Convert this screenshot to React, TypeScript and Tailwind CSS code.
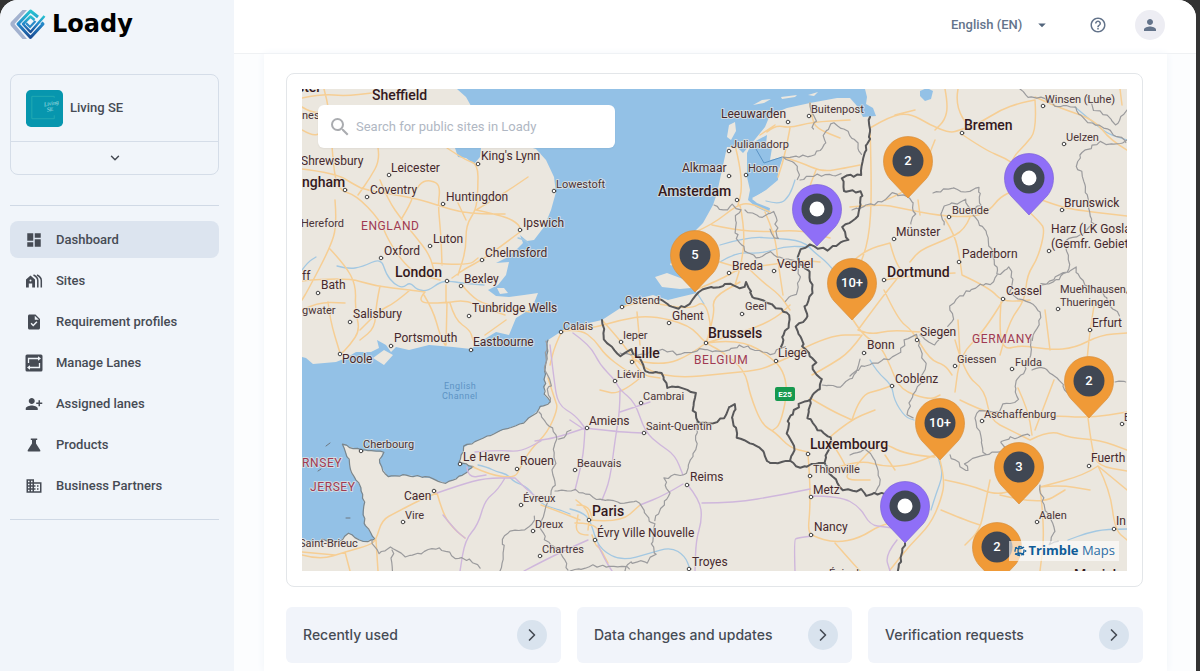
import type { ReactNode } from "react"
import {
  MdArrowDropDown,
  MdBusiness,
  MdDashboard,
  MdHelpOutline,
  MdPerson,
  MdPersonAddAlt1,
  MdSearch,
  MdTask,
} from "react-icons/md"
import { ChevronDown, ChevronRight } from "lucide-react"

// The map is drawn in its own canvas space, which starts at MAP.x / MAP.y
const MAP = { x: 302, y: 89, width: 825, height: 482 }

const land = [
  // Great Britain
  "M302 89H457L466 97 471 106 464 120 455 135V148L458 157 466 158 474 164 480 157 481 148 500 144 520 144 536 149 546 160 554 177 556 192 551 210 544 227 534 240 527 241 520 235 523 243 516 250 506 258 496 263 509 262 506 275 498 285 488 290 496 296 509 297 524 295 538 293 534 303 529 310 516 318 509 335 496 332 483 340 471 349 453 347 429 345 409 350 396 347 391 352 386 345 377 340 379 348 371 352 356 352 346 358 336 362 313 364 306 358 302 357Z",
  "M373 358L384 350 393 355 384 365Z",
  "M497 288L504 288 508 293 500 294Z",
  // Continent
  "M602 320L622 307 637 299 653 295 668 300 680 297 697 293 691 288 680 289 662 287 655 277 667 273 683 279 691 283 693 270 670 265 677 247 693 233 703 223 713 205 717 193 722 170 727 147 737 147 743 153 752 143 765 127 770 115 787 108 810 103 837 98 850 98 857 106 863 117 876 116 873 108 866 104 867 97 865 89H1127V571H302V538L313 543 323 540 339 542 348 533 363 542 375 539 364 523V503L361 487 351 473 349 460 343 445 361 450 383 452 379 463 388 477 406 475 429 478 446 483 463 475 473 467 459 462 464 447 483 438 503 430 523 423 536 412 541 407 551 402 544 395 546 363 548 340 562 331 580 325Z",
  // Wadden islands
  "M729 125L735 122 736 131 731 140 727 137Z",
  "M753 105L762 100 771 99 764 103Z",
  "M781 97L797 95 795 97 782 99Z",
  "M808 95L818 92 814 96Z",
]

const lakes = [
  "M747 153L752 143 767 135 766 144 772 148 770 160 783 157 778 172 778 180 766 190 752 199 757 203 770 208 769 213 756 207 748 200 750 190 747 177Z",
  "M920 91L927 88 933 91 931 99 925 101 920 96Z",
]

const rivers = [
  "M337 266 348 269 362 267 381 258 386 274 394 284 403 288 410 282 417 290 428 291 440 282 450 281 461 283 484 285",
  "M720 245 747 237 775 238 803 241 815 253 828 263 845 285",
  "M720 262 736 252 760 254 785 246 810 247",
  "M697 293 704 304",
  "M870 360 877 372 892 385 894 400 905 417 914 420",
  "M927 417 939 460 943 475 936 494 931 510",
  "M1075 107 1095 124 1108 134 1127 140",
  "M570 509 582 512 590 520 594 534 601 550 622 561 650 553 671 547 685 556 690 569",
  "M478 465 487 467 497 472 507 474 514 482 528 487 540 504 560 510 570 514",
  "M1127 529 1106 529 1087 533 1068 540",
  "M302 270 308 262 316 257",
  "M766 201 780 205 790 195 795 180",
  "M518 238 526 240 530 246",
]

const highways = [
  "M302 98 322 94 345 96 372 93 M302 107 315 115 330 108 M302 130 312 136 322 133 M324 89 330 110 333 165 338 190 356 195 380 220 388 240 405 265 420 275 440 280",
  "M302 169 335 173 355 185 365 190 415 198 440 206 460 212 482 214 505 214",
  "M335 200 337 225 330 248 308 290 302 300 M330 249 345 265 356 285 355 310 360 330 350 345 340 355",
  "M378 148 380 160 370 178 358 195 M380 180 388 200 402 220 415 236 430 255 435 275",
  "M302 281 345 277 375 286 410 290 425 292 M402 218 410 205 415 190 424 180 437 182 440 190 438 205 441 235 442 265 M432 263 468 266 478 258",
  "M447 148 465 160 478 164 478 190 476 210 466 225 466 250 458 275 M476 210 500 196 528 177 M458 203 466 220",
  "M520 232 500 247 482 260 466 268 452 278 M476 210 505 216 520 225 520 232",
  "M380 286 376 305 375 328 360 340 M410 290 395 303 380 310 360 330 M425 292 415 303 445 303 465 300 485 308 505 315",
  "M424 295 433 310 440 335 445 345 M447 303 446 345 M450 303 455 320 470 330 473 340 M446 285 446 303 M462 285 470 295 485 305 530 312 M485 335 506 320",
  "M328 302 330 320 340 353 M302 310 318 302 345 303",
  "M562 331 555 345 550 365 M562 331 580 329 595 340 605 355 625 370 640 378 M602 320 620 340 632 357 650 372 680 378 720 374 760 370 776 363 800 352",
  "M562 331 590 329 620 320 650 315 690 325 705 343 720 350 745 370 750 395 762 425 775 432 790 448 808 452 M622 307 640 300 690 310 705 300 712 330 706 343",
  "M637 312 640 345 M706 343 740 338 775 360 785 375 787 395 780 425 773 430",
  "M706 343 690 355 665 365 630 360 M706 343 750 330 776 318 790 305 M706 343 715 315 712 298 740 282",
  "M695 290 720 280 740 268 770 265 800 260 820 262 M693 233 712 225 737 205 750 203 770 212 M712 225 735 230 765 232 800 230 830 238",
  "M735 145 740 165 742 190 738 205 M767 132 775 125 790 128 812 122 850 120 M790 128 785 155 778 177 M775 125 760 135 M810 103 812 122 820 130 840 138 M783 157 800 162 822 172 845 168 860 165 M816 170 806 195 800 225",
  "M740 205 745 230 742 262 735 285 M742 262 760 280 780 295 790 310 M765 212 775 235 778 262 783 295 M713 260 740 268",
  "M870 128 890 116 910 113 930 125 950 133 960 130 980 123 1000 110 1020 103 1035 100 M960 133 985 150 1005 158 1020 168 M870 128 872 190 869 240 858 270",
  "M945 89 948 105 945 120 935 130 M895 115 915 110 M958 89 955 105 970 130 M1035 100 1037 130 1025 145 1012 158 1010 175",
  "M850 207 880 204 900 208 940 216 975 217 990 210 1000 197 1015 190 1055 205 1075 210 1127 216 M1020 203 1040 222 1045 230 1038 258 1027 275 1025 300 1010 320 1000 355",
  "M970 217 965 230 945 240 920 250 910 262 M945 219 955 235 960 260 962 275 M962 275 990 288 1002 302 1030 300 M884 280 915 275 955 273 M884 290 898 320 912 330 930 360 945 365 952 375",
  "M885 200 915 190 935 140 M852 262 865 250 890 243 M890 243 895 262 905 275 M918 200 920 215",
  "M858 330 870 335 890 330 920 332 M850 315 862 335 880 345 890 365 900 390 930 400 940 395 M862 335 850 352 830 365 812 375 M858 330 880 300 900 275",
  "M810 398 830 410 852 420 M852 420 860 395 880 390 893 385 M830 437 850 420 875 410 M800 350 830 335 860 335",
  "M1001 302 999 330 1004 350 1020 345 1050 350 1075 348 1100 335 1127 333 M1002 302 985 330 960 355 955 392 M955 340 965 375 985 390 990 420 1010 430 1030 440",
  "M1030 440 1050 430 1070 438 1100 440 1127 450 M1018 388 1028 410 1032 435 M1054 380 1035 430 M960 400 1000 420 1045 415 1090 418 1127 412 M1088 418 1092 450 1098 466 1127 471 M1098 466 1085 475 1040 487",
  "M838 467 860 460 885 467 910 465 935 455 M940 460 945 480 941 500 930 525 910 545 890 570 M945 480 970 485 995 495 1015 490 M935 457 905 455 880 440 852 470",
  "M941 510 965 520 980 525 M990 480 985 505 980 530 965 545 M1098 466 1110 490 1115 530 1127 540 M1098 466 1127 490 M1040 487 1045 530 1040 571 M1040 487 1060 485 1090 490",
  "M808 454 810 480 810 510 808 530 812 536 835 543 860 538 880 525 905 520 M835 543 850 560 860 571 M830 440 850 470 845 480 870 480",
  "M302 555 320 560 345 552 370 545 376 540 382 520 395 513 420 500 437 493 M376 540 378 571 M302 552 335 555 M437 493 443 515 455 530 465 538 M345 552 350 571",
  "M548 378 555 400 558 408 548 432 530 450 520 468 M473 467 490 475 515 478 520 468 M541 505 560 512 580 520 M576 500 590 510 588 530 M577 505 588 505 592 518 M575 523 592 523 600 532 M590 520 620 523 640 505 M588 535 575 535 578 515 M592 535 595 545 600 548 608 563",
  "M640 378 620 395 600 390 M632 357 640 375 660 378 M1127 150 1110 140 1095 120 1060 108 1035 97 M1120 89 1122 105",
  "M885 455 895 470 M960 355 958 320 M1045 310 1050 350 M1095 300 1090 330 1087 360 M1000 495 1040 505 1065 490",
]

const tollRoads = [
  "M550 345 554 380 558 405 575 415 585 428 M573 333 590 345 600 365 615 380 620 390 635 402 645 432 660 445 675 455 683 475",
  "M585 428 560 437 535 441 M585 428 584 450 580 470 575 490 M585 428 620 432 643 433 M620 390 620 410 615 440 610 480 602 500 M585 430 570 420",
  "M687 484 700 500 702 520 696 540 695 571 M702 503 735 503 780 495 810 489 M683 484 665 495 640 505 M810 496 840 496 860 507 870 525 885 527 893 528",
  "M437 493 460 485 485 478 515 478 M475 452 500 450 520 452 541 441 M515 478 525 488 540 500 M505 478 498 490 485 500 478 525 465 540 460 571",
  "M467 467 468 478 486 475 M524 571 545 560 570 548 588 540 M598 545 605 560 612 571 M795 571 794 540 797 538 812 536 M620 412 650 402",
  "M897 540 885 555 890 571 M443 515 455 530 465 538",
]

const regions = [
  "M546 341 546 370 551 385 547 390 551 402",
  "M539 412 545 420 553 428 556 440 553 450 555 462 552 475 556 486 552 491 545 510 540 525 545 540 560 550 568 571",
  "M555 491 575 490 600 500 625 503 637 500 641 507 650 520 655 525 652 545 655 555 648 562 630 562",
  "M697 422 696 445 690 460 687 473 665 478 666 485 670 495 655 520",
  "M620 353 635 355 665 350 680 355 700 350 725 352 740 345 770 355 785 347",
  "M714 205 723 210 732 205 740 210 735 220 737 240 745 247 745 252 760 258 770 253 795 262 M745 210 760 218 775 212 778 240 770 230 M795 262 800 280 795 295 785 300",
  "M783 157 795 162 800 175 797 180 M810 103 815 120 812 130 M783 157 815 155 825 145 823 135 835 122 845 130 855 140 862 155 M800 180 810 175 840 175",
  "M372 540 378 555 390 548 405 556 425 552 440 547 455 558 470 560 480 568 M392 550 393 571 M500 571 505 550 502 540 510 530 530 528 535 515",
  "M852 210 870 205 885 200 892 193 910 197 915 215 910 225 M1127 140 1115 145 1100 142 1080 155 1077 165 1085 180 1088 200 1090 215 1093 225",
  "M933 193 945 190 955 187 965 193 980 187 980 205 970 210 965 200 945 207 940 215 945 225 M973 215 985 230 990 245 995 260 997 275 1010 268 1013 280 1010 292 1018 300 1030 302 1040 312 1038 325 1032 340",
  "M997 275 990 285 980 285 965 292 950 305 955 320 948 325 M1093 225 1080 235 1065 240 1070 265 1060 280 1042 285",
  "M1042 285 1060 275 1075 268 1085 285 1100 290 1110 305 1120 315",
  "M850 376 865 365 885 360 900 353 905 340 915 335 920 345 925 365 920 385 910 400 908 415 913 418 M920 335 935 345 945 335",
  "M1030 335 1032 350 1025 370 1015 382 1018 400 1002 405 1000 412 980 410 975 418 M1032 370 1045 368 1060 380 1070 397 1085 398 M1115 382 1127 383",
  "M975 418 980 435 985 455 965 463 968 472 955 460 950 455 M985 455 1005 450 1000 440 1030 435 M1040 485 1045 510 1055 530 1050 545 1058 540",
  "M850 455 865 450 875 460 880 485 875 492 M822 385 840 388 855 375 860 360 M1020 89 1028 97 1045 98 1053 105 1075 107 1085 120 1100 125 1127 143",
  "M571 430 560 440 M570 571 590 566 630 568 M625 571 630 562 M1127 110 1115 125 1108 115 1095 110 1085 95",
]

const borders = [
  "M658 300 664 300 673 308 690 305 698 293 710 287 718 288 730 283 740 288 747 283 752 297 770 303 787 313 790 320 783 337 782 347",
  "M870 117 870 140 863 157 860 175 842 177 843 190 860 192 862 195 860 213 850 223 842 228 847 240 827 250 810 245 798 252 800 263 810 273 813 290 805 307 808 317 797 327 803 340 803 347 815 362 813 370 822 380 820 388 810 398 800 403 788 420 787 433 795 450 790 460",
  "M810 400 808 417 817 430 832 437 830 447 823 463",
  "M770 463 790 460 800 467 823 463 833 477 843 490 860 490 867 495 883 493 895 496",
  "M905 543 903 553 898 571",
  "M602 320 605 340 620 355 630 350 642 360 645 372 663 373 667 388 683 387 695 393 693 410 697 422 713 423 725 418 728 407 735 405 733 420 737 437 750 442 762 450 770 463",
]

const coastline =
  "M548 340 546 363 544 395 551 402 541 407 536 412 523 423 503 430 483 438 464 447 459 462 473 467 463 475 446 483 429 478 406 475 388 477 379 463 383 452 361 450 343 445 349 460 351 473 361 487 364 503 364 523 375 539 363 542 348 533 339 542 323 540"

type Point = [x: number, y: number]

function parseLines(d: string): Point[][] {
  return d
    .split("M")
    .filter((part) => part.trim())
    .map((part) => {
      const n = part.trim().split(/\s+/).map(Number)
      return n.flatMap((x, i): Point[] => (i % 2 ? [] : [[x, n[i + 1] ?? 0]]))
    })
}

// Repeatable pseudo random number in -1..1
function noise(seed: number) {
  const s = Math.sin(seed * 12.9898) * 43758.5453
  return (s - Math.floor(s)) * 2 - 1
}

// Adds small kinks between the points, for borders that follow the terrain
function jagged(lines: string[], amount: number) {
  return parseLines(lines.join(" "))
    .map((points) => {
      let d = `M${points[0]}`
      for (let i = 1; i < points.length; i++) {
        const [x0, y0] = points[i - 1]!
        const [x1, y1] = points[i]!
        const steps = Math.max(1, Math.round(Math.hypot(x1 - x0, y1 - y0) / 4))
        for (let s = 1; s <= steps; s++) {
          const x = x0 + ((x1 - x0) * s) / steps
          const y = y0 + ((y1 - y0) * s) / steps
          const dx = noise(x + y * 3) * amount
          const dy = noise(x * 5 + y) * amount
          d += `L${(x + dx).toFixed(1)} ${(y + dy).toFixed(1)}`
        }
      }
      return d
    })
    .join("")
}

// Rounds the corners of a line by running curves through the midpoints
function smooth(lines: string[]) {
  return parseLines(lines.join(" "))
    .map((points) => {
      let d = `M${points[0]}`
      for (let i = 1; i < points.length - 1; i++) {
        const [x, y] = points[i]!
        const [nx, ny] = points[i + 1]!
        d += `Q${x} ${y} ${(x + nx) / 2} ${(y + ny) / 2}`
      }
      return d + `L${points[points.length - 1]}`
    })
    .join("")
}

type Label = [text: string, x: number, y: number, dot?: Point]

const cities: Label[] = [
  ["Sheffield", 372, 100],
  ["ster", 297, 92],
  ["ngham", 302, 187, [345, 190]],
  ["London", 395, 277, [447, 281]],
  ["Amsterdam", 658, 196, [737, 200]],
  ["Bremen", 964, 130, [962, 133]],
  ["Dortmund", 887, 277, [884, 280]],
  ["Brussels", 708, 338, [706, 343]],
  ["Lille", 634, 358, [632, 362]],
  ["Luxembourg", 810, 449, [808, 454]],
  ["Paris", 592, 516, [589, 520]],
]

const towns: Label[] = [
  ["Leicester", 391, 172, [389, 175]],
  ["Shrewsbury", 301, 165],
  ["Coventry", 370, 194, [367, 197]],
  ["Huntingdon", 446, 201, [443, 204]],
  ["King's Lynn", 481, 160, [478, 164]],
  ["Ipswich", 523, 227, [520, 230]],
  ["Luton", 433, 243, [430, 246]],
  ["Oxford", 384, 255, [381, 258]],
  ["Chelmsford", 485, 257, [482, 260]],
  ["Bexley", 464, 283, [461, 286]],
  ["Bath", 321, 289, [318, 293]],
  ["ff", 302, 280],
  ["Salisbury", 353, 318, [350, 322]],
  ["Tunbridge Wells", 472, 312, [469, 316]],
  ["Portsmouth", 394, 342, [391, 346]],
  ["Eastbourne", 473, 346, [471, 350]],
  ["Poole", 342, 363, [340, 354]],
  ["Leeuwarden", 721, 118, [788, 122]],
  ["Alkmaar", 682, 172, [729, 176]],
  ["Breda", 732, 270, [729, 273]],
  ["Veghel", 777, 268, [774, 271]],
  ["Ghent", 672, 320, [669, 323]],
  ["Liege", 778, 357, [776, 361]],
  ["Münster", 896, 236, [894, 239]],
  ["Paderborn", 962, 258, [959, 262]],
  ["Brunswick", 1064, 207, [1062, 210]],
  ["Harz (LK Goslar)", 1051, 233],
  ["(Gemfr. Gebiet)", 1051, 248, [1049, 251]],
  ["Cassel", 1006, 295, [1003, 299]],
  ["Erfurt", 1092, 327, [1090, 330]],
  ["Siegen", 920, 336, [917, 340]],
  ["Bonn", 867, 349, [864, 353]],
  ["Coblenz", 895, 383, [892, 386]],
  ["Fuerth", 1091, 462, [1089, 466]],
  ["Amiens", 589, 425, [587, 428]],
  ["Reims", 690, 481, [687, 485]],
  ["Metz", 813, 494, [811, 497]],
  ["Nancy", 814, 531, [811, 535]],
  ["Troyes", 692, 566, [689, 569]],
  ["Évry Ville Nouvelle", 597, 537, [595, 540]],
  ["Le Havre", 463, 461, [460, 464]],
  ["Rouen", 520, 465, [517, 469]],
  ["Caen", 404, 500, [434, 491]],
  ["In", 1116, 525, [1114, 529]],
]

const villages: Label[] = [
  ["Hereford", 301, 227],
  ["Lowestoft", 556, 188, [554, 191]],
  ["gwater", 302, 314],
  ["nes", 302, 119],
  ["Calais", 563, 330, [561, 332]],
  ["Julianadorp", 731, 148, [729, 151]],
  ["Hoorn", 748, 172, [746, 175]],
  ["Buitenpost", 811, 113, [809, 116]],
  ["Winsen (Luhe)", 1045, 103, [1043, 106]],
  ["Uelzen", 1066, 141, [1064, 144]],
  ["Buende", 952, 214, [949, 217]],
  ["Muehlhausen/", 1060, 293],
  ["Thueringen", 1060, 306, [1058, 309]],
  ["Giessen", 957, 363, [955, 366]],
  ["Fulda", 1015, 366, [1012, 369]],
  ["Aschaffenburg", 984, 418, [982, 421]],
  ["Aalen", 1039, 519, [1037, 522]],
  ["Ostend", 625, 304, [622, 307]],
  ["Ieper", 623, 339, [621, 342]],
  ["Geel", 745, 310, [742, 314]],
  ["Liévin", 617, 378, [615, 381]],
  ["Cambrai", 643, 400, [641, 403]],
  ["Saint-Quentin", 646, 430, [644, 433]],
  ["Beauvais", 577, 467, [575, 470]],
  ["Thionville", 813, 473, [810, 476]],
  ["Évreux", 523, 502, [521, 505]],
  ["Dreux", 535, 528, [533, 531]],
  ["Chartres", 542, 553, [540, 556]],
  ["Cherbourg", 363, 448, [361, 451]],
  ["Vire", 405, 519, [403, 522]],
  ["Saint-Brieuc", 299, 547],
  ["E", 1124, 421, [1122, 424]],
  ["Épinal", 829, 577],
]

const countries: Label[] = [
  ["ENGLAND", 361, 230],
  ["BELGIUM", 694, 364],
  ["GERMANY", 972, 343],
  ["RNSEY", 302, 467],
  ["JERSEY", 310, 491],
]

const pins: { label?: string; x: number; y: number }[] = [
  { label: "2", x: 908, y: 161 },
  { x: 1029, y: 178 },
  { x: 817, y: 209 },
  { label: "5", x: 695, y: 255 },
  { label: "10+", x: 852, y: 283 },
  { label: "2", x: 1089, y: 381 },
  { label: "10+", x: 940, y: 423 },
  { label: "3", x: 1019, y: 467 },
  { x: 905, y: 506 },
  { label: "2", x: 997, y: 547 },
]

function LabelGroup({ labels, className }: { labels: Label[]; className: string }) {
  return (
    <g
      className={className}
      stroke="#ebe7df"
      strokeWidth={2}
      strokeOpacity={0.7}
      paintOrder="stroke"
    >
      {labels.map(([text, x, y, dot]) => (
        <g key={text}>
          {dot && (
            <circle
              cx={dot[0]}
              cy={dot[1]}
              r={1.8}
              fill="#fff"
              stroke="#444"
              strokeWidth={1}
              strokeOpacity={1}
              paintOrder="normal"
            />
          )}
          <text x={x} y={y}>
            {text}
          </text>
        </g>
      ))}
    </g>
  )
}

function MapDrawing() {
  return (
    <svg
      className="block h-full w-full"
      viewBox={`${MAP.x} ${MAP.y} ${MAP.width} ${MAP.height}`}
      fill="none"
      strokeLinejoin="round"
      strokeLinecap="round"
    >
      <rect x={MAP.x} y={MAP.y} width={MAP.width} height={MAP.height} fill="#93c1e6" />
      <path d={land.join("")} fill="#ebe7df" />
      <path d={lakes.join("")} fill="#93c1e6" />
      <path d="M752 198L773 187 787 180 792 190 783 203 770 208Z" fill="#ebe7df" />
      <path d="M326 446L330 443M318 471L321 469M346 518L350 518" stroke="#6d7780" />
      <path d={jagged([coastline], 1)} stroke="#7b868c" strokeWidth={1.2} />
      <path d={smooth(rivers)} stroke="#a3c8e2" strokeWidth={1.3} />
      <path d={smooth(highways)} stroke="#f6ce94" strokeWidth={1.5} />
      <path d={smooth(tollRoads)} stroke="#cfb7dc" strokeWidth={1.4} />
      <path d="M756 149L764 163 782 157" stroke="#5b93c4" />
      <path d={jagged(regions, 1.5)} stroke="#9b9b9d" strokeWidth={1.2} />
      <path d={jagged(borders, 1.5)} stroke="#58585a" strokeWidth={2} />

      <LabelGroup labels={countries} className="fill-[#a03a52] text-[12px] tracking-wider" />
      <LabelGroup labels={villages} className="fill-[#4a3437] text-[11px]" />
      <LabelGroup labels={towns} className="fill-[#46292d] text-[12px]" />
      <LabelGroup labels={cities} className="fill-[#34191d] text-[14px] font-medium" />
      <g className="fill-[#5d93c4] text-[9px] tracking-wider">
        <text x="444" y="389">English</text>
        <text x="442" y="399">Channel</text>
      </g>
      <rect x="775" y="387" width="20" height="14" rx="2" fill="#16994f" />
      <text x="785" y="397" textAnchor="middle" className="fill-white text-[8px] font-bold">
        E25
      </text>
      <text x="1074" y="580" className="fill-[#34191d] text-[14px] font-medium">
        Munich
      </text>
    </svg>
  )
}

function Pin({ label, x, y }: { label?: string; x: number; y: number }) {
  return (
    <button
      type="button"
      aria-label={label ? `${label} sites` : "Site"}
      className="absolute h-[62px] w-[50px] -translate-x-1/2 -translate-y-[25px]"
      style={{
        left: `${((x - MAP.x) / MAP.width) * 100}%`,
        top: `${((y - MAP.y) / MAP.height) * 100}%`,
      }}
    >
      <svg viewBox="0 0 50 62" className="h-full w-full">
        <path
          d="M25 62L6.500 42.500C2.500 37.500 .5 31.500 .5 25a24.500 24.500 0 0 1 49 0c0 6.500-2 12.500-6 17.500Z"
          fill={label ? "#f09a37" : "#8f6ff7"}
          stroke={label ? "#d98f3c" : "#7d63da"}
          strokeWidth=".7"
        />
        <circle cx="25" cy="25" r="15.500" fill="#404753" />
        {label ? (
          <text x="25" y="29" textAnchor="middle" className="fill-white text-[13px] font-medium">
            {label}
          </text>
        ) : (
          <circle cx="25" cy="25" r="7.500" fill="#fff" />
        )}
      </svg>
    </button>
  )
}

function SiteMap() {
  return (
    <div className="relative aspect-[825/482] overflow-hidden">
      <MapDrawing />
      {pins.map((pin) => (
        <Pin key={`${pin.x}-${pin.y}`} {...pin} />
      ))}
      <label className="absolute top-4 left-4 flex h-[43px] w-[297px] items-center gap-1 rounded-md bg-white px-2.5 shadow-xs">
        <MdSearch className="size-6 shrink-0 text-[#aaacb0]" />
        <input
          type="text"
          aria-label="Search for public sites in Loady"
          placeholder="Search for public sites in Loady"
          className="w-full bg-transparent text-[13px] outline-none placeholder:text-[#b0b7c3]"
        />
      </label>
      <a
        href="#trimble"
        className="absolute right-2 bottom-2.5 flex h-5 items-center gap-0.5 bg-white/60 px-1 font-['Open_Sans',sans-serif] text-[13px] text-[#2b6ea6]"
      >
        <svg viewBox="0 0 14 14" className="size-3.5" fill="none" stroke="#15619d" strokeWidth="1.300">
          <circle cx="6.500" cy="7" r="4.500" strokeDasharray="5 1.500" />
          <path d="M2 3.500C5 5 9 5 11 3M2 10.500C5 8.500 9 9 11 11M6.500 2.500C4.500 5 4.500 9 6.500 11.500" />
          <circle cx="12.500" cy="7" r=".9" fill="#15619d" stroke="none" />
        </svg>
        <span>
          <b className="text-[#0f5c98]">Trimble</b> Maps
        </span>
      </a>
    </div>
  )
}

function Logo() {
  return (
    <a href="#home" className="flex items-center gap-1.5 text-black">
      <svg viewBox="0 0 36 32" className="h-8 w-9" fill="none">
        <defs>
          <linearGradient id="logo" x1="0" y1="0" x2="0" y2="1">
            <stop offset="0" stopColor="#27c3d0" />
            <stop offset=".5" stopColor="#2487c9" />
            <stop offset="1" stopColor="#1b4d94" />
          </linearGradient>
        </defs>
        <path d="M12.500 2H17L4.500 16 17 31H12.500L1 18Q-.3 16 1 14Z" fill="#a3b2cf" />
        <path
          d="M28 9L20.500 3 8 16 20.500 29.500 33 16 31.500 14.500"
          stroke="url(#logo)"
          strokeWidth="3"
          strokeLinejoin="round"
        />
        <path
          d="M24.500 12L20.500 8.500 13 16 20.500 24 34.500 8"
          stroke="url(#logo)"
          strokeWidth="2.500"
          strokeLinejoin="round"
        />
        <path d="M16 15L20 19 25.500 13" stroke="#2a8bc8" strokeWidth="2.200" />
      </svg>
      <span className="font-['DejaVu_Sans',sans-serif] text-2xl leading-8 font-bold">Loady</span>
    </a>
  )
}

function SitesIcon() {
  return (
    <svg viewBox="0 0 18 18" className="size-[18px]" fill="none">
      <path
        d="M1 15.500V7.500L5.500 3.500 10 7.500V15.500H7.200V11.500H3.800V15.500Z"
        fill="currentColor"
      />
      <circle cx="5.500" cy="8.500" r="1" fill="#f1f5fa" />
      <path
        d="M8.500 3C11.500 4.500 12.800 6 12.800 8.500V15.500M12 3C15 4.500 16.300 6 16.300 8.500V15.500"
        stroke="currentColor"
        strokeWidth="1.500"
      />
    </svg>
  )
}

function LanesIcon() {
  return (
    <svg viewBox="0 0 18 18" className="size-[18px]" fill="none">
      <rect x=".5" y=".5" width="17" height="17" rx="1.500" fill="currentColor" />
      <path d="M3.500 9V4.500H14M14.500 9V13.500H4" stroke="#f1f5fa" strokeWidth="1.300" />
      <path d="M13 2.300L16 4.500 13 6.700ZM5 11.300L2 13.500 5 15.700Z" fill="#f1f5fa" />
    </svg>
  )
}

function FlaskIcon() {
  return (
    <svg viewBox="0 0 18 18" className="size-[18px]" fill="currentColor">
      <path d="M5.800 2.500H12.200V4H11V7.500L15.300 14.300Q15.800 15.500 14.500 15.500H3.500Q2.200 15.500 2.700 14.300L7 7.500V4H5.800Z" />
    </svg>
  )
}

const navItems: { label: string; icon: ReactNode; active?: boolean }[] = [
  { label: "Dashboard", icon: <MdDashboard />, active: true },
  { label: "Sites", icon: <SitesIcon /> },
  { label: "Requirement profiles", icon: <MdTask /> },
  { label: "Manage Lanes", icon: <LanesIcon /> },
  { label: "Assigned lanes", icon: <MdPersonAddAlt1 /> },
  { label: "Products", icon: <FlaskIcon /> },
  { label: "Business Partners", icon: <MdBusiness /> },
]

function Sidebar() {
  return (
    <aside className="w-[234px] shrink-0 bg-[#f1f5fa] pt-2 pr-[15px] pl-[10px]">
      <Logo />
      <div className="mt-[34px] rounded-lg border border-[#d5dde8]">
        <div className="flex h-[66px] items-center gap-[7px] px-[15px]">
          <svg viewBox="0 0 38 38" className="size-[37px]" fill="none">
            <rect width="38" height="38" rx="5" fill="#0796ae" />
            <path d="M29 8V6.500H6V29.500H29V26" stroke="#2fb3b4" strokeWidth=".7" />
            <g
              className="fill-[#b4e3e8] font-['Liberation_Serif',serif] text-[6px] italic"
              transform="rotate(-10 24 18)"
            >
              <text x="19" y="16">Living</text>
              <text x="21" y="22">SE</text>
            </g>
          </svg>
          <span className="text-[13px] font-medium">Living SE</span>
        </div>
        <button
          type="button"
          aria-label="Switch company"
          className="flex h-[33px] w-full items-center justify-center border-t border-[#d5dde8]"
        >
          <ChevronDown className="size-3.5" strokeWidth={2.5} />
        </button>
      </div>
      <nav className="mt-[30px] flex flex-col gap-1 border-y border-[#d0d9e5] py-[15px]">
        {navItems.map(({ label, icon, active }) => (
          <a
            key={label}
            href="#nav"
            className={`flex h-[37px] items-center gap-[13px] rounded-lg px-[15px] text-[13px] font-medium [&>svg]:size-[18px] ${
              active ? "bg-[#dce4ef]" : ""
            }`}
          >
            {icon}
            {label}
          </a>
        ))}
      </nav>
    </aside>
  )
}

function Header() {
  return (
    <header className="flex h-[54px] items-center justify-end border-b border-[#eff1f3] bg-white pr-[31px] pb-1 text-[#64748b]">
      <div className="relative mr-10 flex items-center">
        <select
          aria-label="Language"
          defaultValue="en"
          className="w-[98px] appearance-none bg-transparent text-[13px] font-medium outline-none"
        >
          <option value="en">English (EN)</option>
          <option value="de">Deutsch (DE)</option>
        </select>
        <MdArrowDropDown className="pointer-events-none absolute right-0 -mr-0.5 size-[18px] text-[#52657c]" />
      </div>
      <button type="button" aria-label="Help">
        <MdHelpOutline className="size-[18px]" />
      </button>
      <button
        type="button"
        aria-label="Account"
        className="ml-7 flex size-[30px] items-center justify-center rounded-full bg-[#ededf3]"
      >
        <MdPerson className="size-[18px]" />
      </button>
    </header>
  )
}

export default function App() {
  return (
    <div className="min-h-screen bg-[#333] pr-1 font-[Roboto,sans-serif] text-[#464b54]">
      <div className="flex min-h-screen overflow-hidden rounded-t-[18px] bg-white">
        <Sidebar />
        <div className="flex min-w-0 flex-1 flex-col">
          <Header />
          <div className="flex-1 bg-[#fcfdfe] pr-[29px] pl-[30px]">
            <main className="h-full bg-white pt-[19px] pr-6 pb-2 pl-[22px] shadow-[0_0_8px_#f0f4f9]">
              <section className="rounded-lg border border-[#e3e6e9] p-[15px]">
                <SiteMap />
              </section>
              <section className="mt-5 grid grid-cols-3 gap-4">
                {["Recently used", "Data changes and updates", "Verification requests"].map(
                  (title) => (
                    <button
                      key={title}
                      type="button"
                      className="flex h-14 items-center justify-between rounded-md bg-[#f1f4fa] pr-[14px] pl-[17px] font-[Inter,sans-serif] text-sm font-medium"
                    >
                      {title}
                      <span className="flex size-[30px] items-center justify-center rounded-full bg-[#d9e3ee]">
                        <ChevronRight className="size-5" />
                      </span>
                    </button>
                  ),
                )}
              </section>
            </main>
          </div>
        </div>
      </div>
    </div>
  )
}
